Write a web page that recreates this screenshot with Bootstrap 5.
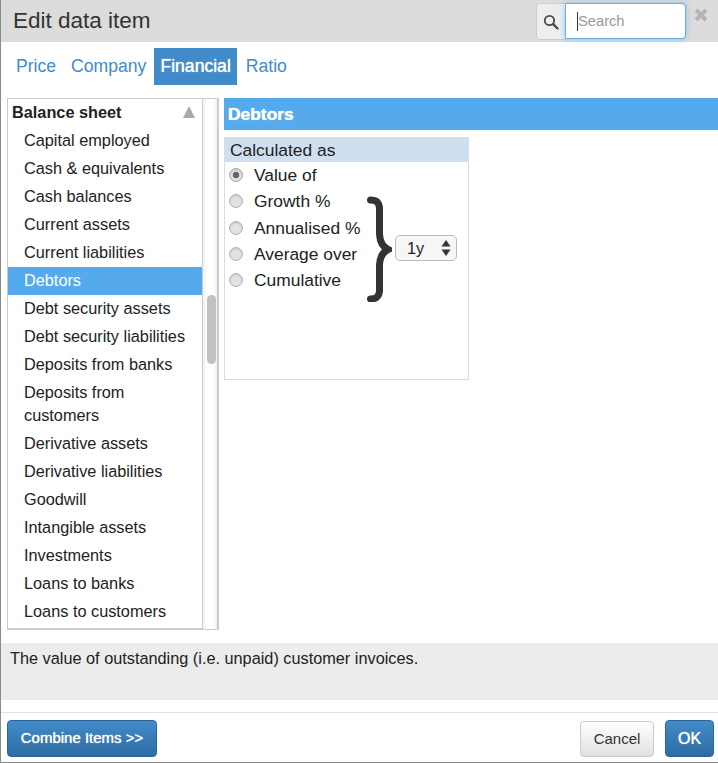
<!DOCTYPE html>
<html lang="en">
<head>
  <meta charset="UTF-8">
  <meta name="viewport" content="width=device-width, initial-scale=1.0">
  <title>Edit data item</title>
  <link href="https://cdn.jsdelivr.net/npm/bootstrap@5.3.3/dist/css/bootstrap.min.css" rel="stylesheet">
  <style>
    html, body { height: 763px; overflow: hidden; }
    body { font-family: "Liberation Sans", Arial, sans-serif; font-size: 16.3px; color: #222; background: #fff; }
    .dlg { height: 763px; border-left: 1px solid #8a8a8a; border-bottom: 1px solid #8a8a8a; display: flex; flex-direction: column; }

    .dlg-head { height: 42px; flex: none; background: #dcdcdc; padding: 0 10px 0 12px; }
    .dlg-title { font-size: 22.5px; line-height: 42px; color: #333; margin: 0; font-weight: 400; }
    .search-group { width: 150px; height: 37px; margin-top: 3px; flex-wrap: nowrap; position: relative; }
    .search-addon { width: 30px; padding: 0; justify-content: center; background: #eee; border-color: #ccc; border-radius: 4px 0 0 4px; }
    .search-input { font-size: 14.7px; height: 36px; padding: 6px 12px; border: 1px solid #66afe9 !important; border-radius: 0 4px 4px 0 !important; box-shadow: 0 0 6px rgba(102,175,233,.6); margin-left: -1px !important; }
    .search-input::placeholder { color: #999; opacity: 1; }
    .search-caret { position: absolute; left: 42px; top: 9px; width: 1px; height: 19px; background: #333; z-index: 6; }
    .close-x { margin-left: 8px; margin-top: 8px; }

    .tab-row { margin: 6px 0 13px 7.500px; flex: none; }
    .tab-row .nav-link { font-size: 17.6px; line-height: 21px; padding: 8px 7.500px; color: #428bca; border-radius: 0; }
    .tab-row .nav-link.active { background: #428bca; color: #fff; margin-right: 1px; padding: 8px 6.500px; text-shadow: 0 0 1px #fff; }

    .main-row { height: 532px; flex: none; }
    .tree-box { width: 212px; margin-left: 6px; flex: none; border: 1px solid #ccc; border-right: 2px solid #ccc; border-top: 0; }
    .tree-list { width: 195px; border-right: 1px solid #ccc; border-top: 1px solid #ccc; border-bottom: 1px solid #ccc; overflow: hidden; margin: 0; padding: 0; list-style: none; flex: none; }
    .tree-head { height: 28px; line-height: 26px; padding: 0 7px 2px 4px; font-weight: 700; }
    .tree-tri { width: 0; height: 0; border-left: 6px solid transparent; border-right: 6px solid transparent; border-bottom: 12px solid #aaa; }
    .tree-item { padding: 2px 4px 3px 16px; line-height: 23px; }
    .tree-item.sel { background: #55aaee; color: #fff; }
    .tree-scroll { flex: 1; background: linear-gradient(to right, #f0f0f0, #fff 30%, #fff 70%, #f0f0f0); border-top: 1px solid #ccc; }
    .tree-thumb { width: 9px; height: 69px; margin: 196px 0 0 4px; background: #c1c1c1; border-radius: 5px; }

    .detail { margin-left: 5px; font-size: 17.4px; }
    .detail-head { height: 32px; line-height: 32px; background: #55aaee; color: #fff; font-weight: 700; padding-left: 4px; text-shadow: 0 0 1px #fff; }
    .calc-box { width: 245px; height: 243px; margin-top: 7px; border: 1px solid #cfdff0; }
    .calc-head { height: 25px; line-height: 26px; background: #cfdff0; margin-top: -1px; margin-left: -1px; margin-right: -1px; padding-left: 6px; color: #222; }
    .calc-radios { padding-top: 0; width: 142px; flex: none; }
    .calc-opt { height: 26.3px; margin: 0; padding: 0 0 0 4px; display: flex; align-items: center; gap: 11px; white-space: nowrap; }
    .calc-opt .form-check-input { width: 14px; height: 14px; margin: 0; float: none; flex: none; background-color: #e2e2e2; background-image: none; border: 1px solid #b4b4b4; box-shadow: inset 0 1px 2px rgba(0,0,0,.15); }
    .calc-opt .form-check-input:checked { background-color: #e2e2e2; border-color: #aaa; background-image: radial-gradient(circle, #666 0, #666 3px, transparent 3.6px); }
    .calc-brace { margin: 34px 0 0 0; flex: none; display: block; }
    .calc-sel { width: 62px; height: 26px; font-size: 16.3px; line-height: 24px; padding: 0 0 0 11px; margin: 73px 0 0 3px; border: 1px solid #bbb; border-radius: 5px; color: #222; background-color: #f6f6f6; background-position: right 5px center; background-size: 10px 18px; flex: none; }

    .desc-bar { height: 57px; flex: none; margin-top: 13px; background: #ececec; padding: 6px 9px; font-size: 16.3px; line-height: 19px; color: #222; }
    .foot-bar { margin-top: 12px; border-top: 1px solid #e2e2e2; padding: 7px 4px 0 6px; flex: none; }
    .btn-blue { font-size: 15px; height: 37px; padding: 0; color: #fff; white-space: nowrap; background: linear-gradient(#428bca, #2d6ca2); border: 1px solid #2b669a; border-radius: 4px; text-shadow: 0 0 1px #fff; }
    .btn-blue.wide { width: 150px; }
    .btn-blue.ok { width: 49px; font-size: 16px; }
    .btn-pale { font-size: 15px; height: 36px; width: 74px; padding: 0; color: #333; background: linear-gradient(#fff, #e0e0e0); border: 1px solid #ccc; border-radius: 4px; margin: 1px 11px 0 0; }
  </style>
</head>
<body>
  <div class="dlg">
    <!-- header -->
    <div class="dlg-head d-flex justify-content-between">
      <h1 class="dlg-title">Edit data item</h1>
      <div class="d-flex">
        <div class="input-group search-group">
          <span class="input-group-text search-addon">
            <svg width="16" height="16" viewBox="0 0 16 16"><circle cx="6.500" cy="6.500" r="4.700" fill="none" stroke="#4a4a4a" stroke-width="1.800"/><path d="M10.200 10.200l4.300 4.300" stroke="#4a4a4a" stroke-width="2.400" stroke-linecap="round"/></svg>
          </span>
          <input type="text" class="form-control search-input" placeholder="Search">
          <span class="search-caret"></span>
        </div>
        <svg class="close-x" width="14" height="14" viewBox="0 0 14 14"><path d="M2 2l10 10M12 2L2 12" stroke="#b4b4b4" stroke-width="4"/></svg>
      </div>
    </div>

    <!-- tabs -->
    <ul class="nav tab-row">
      <li class="nav-item"><a class="nav-link" href="#">Price</a></li>
      <li class="nav-item"><a class="nav-link" href="#">Company</a></li>
      <li class="nav-item"><a class="nav-link active" href="#">Financial</a></li>
      <li class="nav-item"><a class="nav-link" href="#">Ratio</a></li>
    </ul>

    <div class="main-row d-flex">
      <!-- item tree -->
      <div class="tree-box d-flex">
        <ul class="tree-list" id="treeList">
          <li class="tree-head d-flex justify-content-between align-items-center">Balance sheet<span class="tree-tri"></span></li>
        </ul>
        <div class="tree-scroll"><div class="tree-thumb"></div></div>
      </div>

      <!-- detail -->
      <div class="detail flex-grow-1">
        <div class="detail-head">Debtors</div>
        <div class="calc-box">
          <div class="calc-head">Calculated as</div>
          <div class="d-flex">
            <div class="calc-radios">
              <label class="calc-opt"><input class="form-check-input" type="radio" name="calc" checked>Value of</label>
              <label class="calc-opt"><input class="form-check-input" type="radio" name="calc">Growth %</label>
              <label class="calc-opt"><input class="form-check-input" type="radio" name="calc">Annualised %</label>
              <label class="calc-opt"><input class="form-check-input" type="radio" name="calc">Average over</label>
              <label class="calc-opt"><input class="form-check-input" type="radio" name="calc">Cumulative</label>
            </div>
            <svg class="calc-brace" width="25" height="106" viewBox="0 0 25 106"><path d="M3.500 4C9 4 12 6 12.500 12L12.500 38C13 47 16 51 21 53.500C16 56 13 60 12.500 69L12.500 95C12 101 9 103 3.500 103" fill="none" stroke="#333" stroke-width="7" stroke-linecap="round"/></svg>
            <select class="form-select calc-sel" style="background-image:url(&quot;data:image/svg+xml,%3Csvg xmlns='http://www.w3.org/2000/svg' viewBox='0 0 10 18'%3E%3Cpath fill='%23333' d='M5 1l4.500 6.500H.5zM5 17L.5 10.500h9z'/%3E%3C/svg%3E&quot;)"><option>1y</option></select>
          </div>
        </div>
      </div>
    </div>

    <div class="desc-bar">The value of outstanding (i.e. unpaid) customer invoices.</div>

    <div class="foot-bar d-flex justify-content-between">
      <button class="btn btn-blue wide" type="button">Combine Items &gt;&gt;</button>
      <div class="d-flex">
        <button class="btn btn-pale" type="button">Cancel</button>
        <button class="btn btn-blue ok" type="button">OK</button>
      </div>
    </div>
  </div>

  <script>
    const items = ['Capital employed', 'Cash & equivalents', 'Cash balances', 'Current assets', 'Current liabilities',
      'Debtors', 'Debt security assets', 'Debt security liabilities', 'Deposits from banks', 'Deposits from customers',
      'Derivative assets', 'Derivative liabilities', 'Goodwill', 'Intangible assets', 'Investments',
      'Loans to banks', 'Loans to customers'];
    const list = document.getElementById('treeList');
    items.forEach(nome => {
      const li = document.createElement('li');
      li.className = 'tree-item' + (nome === 'Debtors' ? ' sel' : '');
      li.textContent = nome;
      list.appendChild(li);
    });
  </script>
  <script src="https://cdn.jsdelivr.net/npm/bootstrap@5.3.3/dist/js/bootstrap.bundle.min.js"></script>
</body>
</html>
